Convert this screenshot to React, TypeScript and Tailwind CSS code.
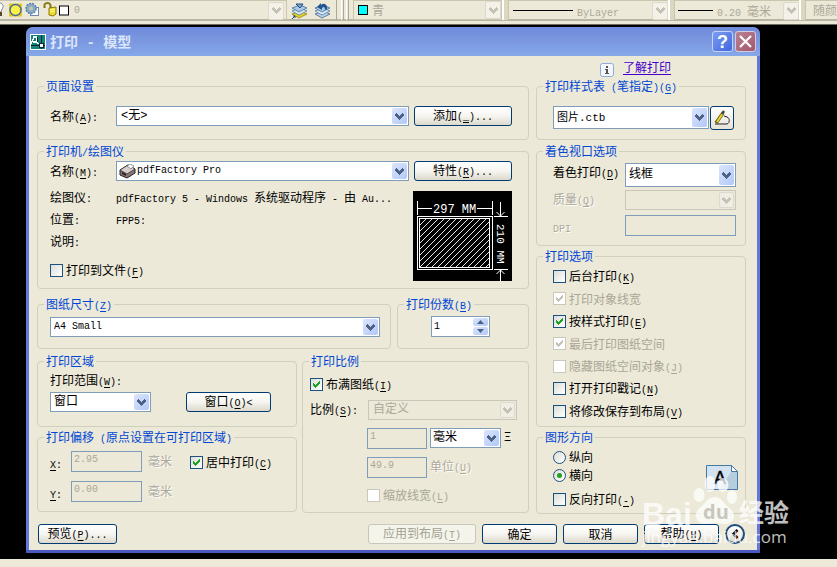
import React from "react";

const mono = "font-['Liberation_Mono','Noto_Sans_CJK_SC',monospace]";

/* Label text: ASCII runs are set in the half-width face, "&" marks the access key. */
function T({ s }: { s: string }) {
  const runs = s.match(/[\x20-\x7e]+|[^\x20-\x7e]+/g) ?? [];
  return (
    <span className="whitespace-pre">
      {runs.map((run, i) => {
        if (run.charCodeAt(0) > 126) return <span key={i}>{run}</span>;
        const at = run.indexOf("&");
        return (
          <span key={i} className={`text-[10px] leading-none ${mono}`}>
            {at < 0 ? run : (
              <>
                {run.slice(0, at)}
                <u className="underline-offset-2">{run[at + 1]}</u>
                {run.slice(at + 2)}
              </>
            )}
          </span>
        );
      })}
    </span>
  );
}

function Chevron() {
  return (
    <svg viewBox="0 0 9 7" className="w-[9px] h-[7px]" shapeRendering="crispEdges">
      <path d="M0 1h1V0h1v1h1v1h1v1h1V2h1V1h1V0h1v1h1v2H8v1H7v1H6v1H5v1H4V6H3V5H2V4H1V3H0z" fill="currentColor" />
    </svg>
  );
}

function Combo({ id, value, label, className = "", disabled = false, size = "text-[12px]", pad = "pl-1", children }: {
  id: string; value: string; label?: string; className?: string; disabled?: boolean; size?: string; pad?: string; children?: React.ReactNode;
}) {
  return (
    <span className={`relative block ${className}`}>
      <select
        id={id}
        aria-label={label}
        disabled={disabled}
        defaultValue={value}
        className={`block appearance-none w-full h-full border ${pad} pr-5 ${size} ${mono} opacity-100 ${disabled ? "border-[#c9c7ba] bg-[#ece9d8] text-[#aca899]" : "border-[#7f9db9] bg-white text-black"}`}
      >
        <option value={value}>{value}</option>
      </select>
      {children}
      <span className={`absolute right-0.5 top-0.5 bottom-0.5 w-[15px] rounded-xs pointer-events-none flex items-center justify-center ${disabled ? "bg-[#f0eee4] border border-[#dddacb] text-[#c4c2b5]" : "bg-linear-to-br from-[#dbe5fd] to-[#b2c8f8] text-[#4d6185]"}`}>
        <Chevron />
      </span>
    </span>
  );
}

function Btn({ s, className = "", disabled = false }: { s: string; className?: string; disabled?: boolean }) {
  return (
    <button
      type="button"
      disabled={disabled}
      className={`h-5 flex items-center justify-center rounded-[3px] border leading-none ${disabled ? "border-[#c9c7ba] bg-[#f5f4ea] text-[#a1a192]" : "border-[#003c74] bg-linear-to-b from-white via-[#f6f5f0] to-[#dcd8cb]"} ${className}`}
    >
      <T s={s} />
    </button>
  );
}

function Check({ s, checked = false, disabled = false, className = "" }: { s: string; checked?: boolean; disabled?: boolean; className?: string }) {
  return (
    <label className={`flex items-center gap-[3px] h-3.5 leading-[14px] ${disabled ? "text-[#a9a796]" : ""} ${className}`}>
      <span className="grid">
        <input
          type="checkbox"
          defaultChecked={checked}
          disabled={disabled}
          className={`col-start-1 row-start-1 appearance-none size-[13px] border ${disabled ? "border-[#cac8bb] bg-white" : "border-[#1c5180] bg-linear-to-br from-[#dcdcd7] to-white"}`}
        />
        {checked && (
          <svg viewBox="0 0 13 13" className={`col-start-1 row-start-1 size-[13px] pointer-events-none ${disabled ? "text-[#c4c2b5]" : "text-[#21a121]"}`} shapeRendering="crispEdges">
            <path d="M3 5h1v1h1v1h1V6h1V5h1V4h1V3h1v3H9v1H8v1H7v1H6v1H5V9H4V8H3z" fill="currentColor" />
          </svg>
        )}
      </span>
      <T s={s} />
    </label>
  );
}

function Radio({ s, checked = false }: { s: string; checked?: boolean }) {
  return (
    <label className="flex items-center gap-[3px] h-3.5 leading-[14px]">
      <span className="grid place-items-center">
        <input type="radio" name="orientation" defaultChecked={checked} className="col-start-1 row-start-1 appearance-none size-[13px] rounded-full border border-[#1c5180] bg-linear-to-br from-[#dcdcd7] to-white" />
        {checked && <span className="col-start-1 row-start-1 size-[5px] rounded-full bg-[#21a121] pointer-events-none" />}
      </span>
      <T s={s} />
    </label>
  );
}

function Group({ title, className = "", children }: { title: string; className?: string; children: React.ReactNode }) {
  return (
    <fieldset className={`border border-[#d0d0bf] rounded-[4px] min-w-0 ${className}`}>
      <legend className="ml-1.5 px-0.5 h-4 leading-4 text-[#0046d5]"><T s={title} /></legend>
      {children}
    </fieldset>
  );
}

function Num({ id, label, value, className = "" }: { id: string; label?: string; value: string; className?: string }) {
  return (
    <input id={id} aria-label={label} disabled defaultValue={value} className={`block h-[21px] min-w-0 border border-[#7f9db9] bg-[#ece9d8] pl-0.5 pb-1 text-[10px] text-[#aca899] ${mono} ${className}`} />
  );
}

const etched = "text-[#aca899] [text-shadow:1px_1px_0_white]";

function BarArrow() {
  return (
    <button type="button" aria-label="展开" className="w-4 h-[18px] shrink-0 border border-[#dddacb] bg-[#f3f1e8] rounded-xs flex items-center justify-center text-[#c4c2b5]">
      <Chevron />
    </button>
  );
}

function Sep() {
  return <span className="w-[7px] shrink-0 h-5 border-l-2 border-l-white border-r border-r-[#c9c5ae] bg-[#dcd8c0]" />;
}

function Layers({ back = false }: { back?: boolean }) {
  return (
    <svg viewBox="0 0 17 17" className="w-[17px] h-[17px]">
      <path d="M1 12l8-3 7 3-8 4z" fill={back ? "#b9d0e6" : "#e3d12c"} stroke={back ? "#48678b" : "#8f8112"} strokeWidth=".8" />
      <path d="M1 9l8-3 7 3-8 4z" fill="#dcebf5" stroke="#517da5" strokeWidth=".8" />
      <path d="M1 6l8-3 7 3-8 4z" fill="#a9c9e5" stroke="#426f9e" strokeWidth=".8" />
      {back ? <path d="M13 7c1-4-3-7-6-4V1L3 5l5 3V6c2-2 3-1 3 2z" fill="#21558d" /> : <path d="M1 17l3-3m0 0H2m2 0v2M5 2h7l-3 4z" stroke="#173d73" fill="#7fa9d3" strokeWidth=".9" />}
    </svg>
  );
}

function Toolbar() {
  return (
    <header className="h-[25px] bg-[#ece9d8] border-b border-[#6e6b5c] overflow-hidden">
      <div className="h-[21px] flex items-start border-b-2 border-[#b8b5a2] text-[#aca899]">
        <div className="w-[287px] h-5 shrink-0 flex items-center border-t border-r border-[#c9c5ae] pr-0.5">
          <svg viewBox="0 0 72 19" className="w-[72px] h-[19px] shrink-0">
            <path d="M0 2c3 0 4 4 2 6l-1 3H0" fill="#fff" stroke="#888" />
            <path d="M1 11v4" stroke="#55492a" strokeWidth="2" />
            <rect x="9" y="2.500" width="13" height="13" fill="#e6c922" />
            <circle cx="15.500" cy="9" r="5.500" fill="#fbf04a" stroke="#456a9b" strokeWidth="1.400" />
            <rect x="30.500" y="6.500" width="8" height="8" fill="#fff" stroke="#6b8cae" />
            <circle cx="31" cy="7.500" r="5" fill="#89a9c8" stroke="#5d82a8" strokeDasharray="2 1" strokeWidth="1.500" />
            <circle cx="31" cy="7.500" r="2" fill="#c3c9ad" />
            <path d="M44.500 7V4c0-2 5-3 6 0v5" fill="none" stroke="#85780d" strokeWidth="2" />
            <path d="M49 7l7-1v7l-3 2-4-1z" fill="#f0dc26" stroke="#85780d" />
            <path d="M50 9l5-1M50 11l5-1" stroke="#fff799" />
            <rect x="59.500" y="5" width="9" height="9" fill="#fff" stroke="#000" />
          </svg>
          <span className={`ml-0.5 text-[10px] flex-1 ${mono}`}>0</span>
          <BarArrow />
        </div>
        <div className="w-[50px] h-5 shrink-0 flex items-center gap-1.5 pl-1 border-r border-[#aca899]">
          <button type="button" aria-label="图层"><Layers /></button>
          <button type="button" aria-label="上一个图层"><Layers back /></button>
        </div>
        <div className="w-4 h-5 shrink-0 flex gap-0.5 pl-1">
          <span className="w-[3px] border-l border-white border-r border-r-[#aca899]" />
          <span className="w-[3px] border-l border-white border-r border-r-[#aca899]" />
        </div>
        <div className="w-[149px] h-5 shrink-0 flex items-center gap-1 border border-[#c9c5ae] pl-1">
          <span className="size-2.5 bg-[#00ffff] border border-black" />
          <span className="flex-1">青</span>
          <BarArrow />
        </div>
        <Sep />
        <div className="w-[159px] h-5 shrink-0 flex items-center gap-1 border-t border-[#c9c5ae] pl-1">
          <span className="w-[60px] h-px bg-black" />
          <span className="flex-1"><T s="ByLayer" /></span>
          <BarArrow />
        </div>
        <Sep />
        <div className="w-[124px] h-5 shrink-0 flex items-center gap-1 border-t border-[#c9c5ae] pl-[3px]">
          <span className="w-[35px] h-px bg-black" />
          <span className="flex-1"><T s="0.20 毫米" /></span>
          <BarArrow />
        </div>
        <Sep />
        <div className="h-5 flex-1 leading-[18px] pl-[7px] whitespace-nowrap overflow-hidden border-t border-[#c9c5ae]">随颜</div>
      </div>
    </header>
  );
}

function PaperPreview() {
  return (
    <svg viewBox="0 0 99 90" className="w-[99px] h-[90px] bg-black shrink-0" fill="none" stroke="#fff">
      <g shapeRendering="crispEdges">
        <rect x="4.500" y="25.500" width="75" height="53" />
        <rect x="6.500" y="27.500" width="70" height="49" />
        <path d="M4.500 10v14M79.500 10v14M5 17.500h14M64 17.500h15M81 25.500h14M81 78.500h14M87.500 11v14M87.500 79v11" />
      </g>
      <path
        strokeWidth=".9"
        d="M7 34l6-6M7 40l12-12M7 46l18-18M7 52l24-24M7 58l30-30M7 64l36-36M7 70l42-42M7 76l48-48M13 76l48-48M19 76l48-48M25 76l48-48M31 76l45-45M37 76l39-39M43 76l33-33M49 76l27-27M55 76l21-21M61 76l15-15M67 76l9-9M73 76l3-3"
      />
      <path d="M83.500 21l4 4 4-4M83.500 83l4-4 4 4" />
      <text x="20" y="22" fontSize="12" fill="#fff" stroke="none" fontFamily="Liberation Mono, monospace">297 MM</text>
      <text transform="translate(84 33) rotate(90)" fontSize="11" fill="#fff" stroke="none" fontFamily="Liberation Mono, monospace">210 MM</text>
    </svg>
  );
}

function Watermark() {
  return (
    <div className="absolute right-[46px] bottom-[18px] w-[149px] h-[74px] pointer-events-none text-white/75 font-['Open_Sans','Noto_Sans_CJK_SC',sans-serif]">
      <span className="absolute left-0 top-[21px] text-[32px] leading-9 font-bold font-['Liberation_Sans',sans-serif]">Bai</span>
      <svg viewBox="0 0 46 52" className="absolute left-[51px] top-0 w-[46px] h-[52px]" fill="currentColor">
        <ellipse cx="6" cy="20" rx="5.500" ry="7" />
        <ellipse cx="17" cy="9" rx="5.500" ry="8" />
        <ellipse cx="30" cy="10" rx="5.500" ry="7" />
        <ellipse cx="39" cy="22" rx="5" ry="7" />
        <path d="M22 22c5 0 8 4 10 7 4 4 9 7 9 12 0 7-6 8-10 8-4 0-6-1-9-1s-6 1-10 1c-5 0-9-3-9-9 0-5 5-8 9-12 2-3 5-6 10-6z" />
      </svg>
      <span className="absolute left-[61px] top-[25px] text-[20px] leading-6 font-bold text-[#c9c7bd]">du</span>
      <span className="absolute left-[97px] top-[19px] text-[25px] leading-9 font-bold whitespace-nowrap">经验</span>
      <span className="absolute left-0 top-[50px] text-[17px] leading-6 whitespace-nowrap">jingyan.baidu.com</span>
    </div>
  );
}

export default function App() {
  return (
    <div className="relative min-h-screen flex flex-col bg-black text-[12px] leading-4 text-black overflow-hidden font-['Noto_Sans_CJK_SC',sans-serif]">
      <Toolbar />
      <main className="flex-1 pt-0.5 pb-1.5 pl-[26px] pr-[77px]">
        <section role="dialog" aria-labelledby="dialog-title" className="min-w-[734px] rounded-t-[7px] bg-[#6478dc] border-b-[3px] border-[#4a58c0] overflow-hidden">
          <div className="h-[29px] flex items-center pl-1 pr-1 bg-linear-to-b from-[#6f8bdc] via-[#7b98e0] to-[#85a9e9]">
            <svg viewBox="0 0 16 16" className="size-4 mr-1" shapeRendering="crispEdges">
              <rect width="16" height="16" fill="#fff" />
              <rect x="1" y="1" width="14" height="14" fill="#128577" />
              <path d="M1 10l3-7h2l2 7M3 8h4" stroke="#fff" strokeWidth="1.500" fill="none" />
              <path d="M11 1v14M1 11h14M7 3v5" stroke="#10263a" />
              <rect x="9" y="9" width="4" height="4" fill="#fff" stroke="#10263a" />
            </svg>
            <h1 id="dialog-title" className="flex-1 text-[14px] font-bold text-[#dbe6fb] whitespace-pre">
              打印<span className={`leading-none ${mono}`}> - </span>模型
            </h1>
            <button type="button" aria-label="帮助" className="size-[21px] rounded-[3px] border border-[#c5d3f6] bg-linear-to-br from-[#7d9cf0] to-[#3f66de] text-white flex items-center justify-center text-[18px] font-bold leading-none font-['Liberation_Sans',sans-serif]">?</button>
            <button type="button" aria-label="关闭" className="ml-0.5 size-[21px] rounded-[3px] border border-[#d5cbe0] bg-linear-to-br from-[#b68395] to-[#a5566b] flex items-center justify-center">
              <svg viewBox="0 0 13 13" className="size-[13px]" stroke="#fff" strokeWidth="2.200"><path d="M1 1l11 11M12 1L1 12" /></svg>
            </button>
          </div>

          <form className="mx-[3px] bg-[#ece9d8] pl-2 pr-[11px] pb-1.5" onSubmit={(e) => e.preventDefault()}>
            <div className="flex justify-end items-start gap-[9px] h-[22px] pt-[3px] pr-[75px]">
              <svg viewBox="0 0 14 14" className="size-3.5 mt-1">
                <rect x=".5" y=".5" width="13" height="13" rx="2" fill="#f4f6fb" stroke="#8eabdc" />
                <path d="M6 3h2v2H6zM5 6h3v4h1v1H5v-1h1V7H5z" fill="#555" />
              </svg>
              <a href="#learn" className="text-[#4400cc] underline underline-offset-2">了解打印</a>
            </div>

            <div className="flex gap-[7px]">
              <div className="flex-1 min-w-0">
                <Group title="页面设置">
                  <div className="flex pl-3 pr-4 pt-3 pb-[13px]">
                    <label htmlFor="setup" className="w-[66px] leading-5"><T s="名称(&A):" /></label>
                    <Combo id="setup" value="<无>" className="flex-1 h-5" />
                    <Btn s="添加(&_)..." className="ml-[5px] w-[98px]" />
                  </div>
                </Group>

                <Group title="打印机/绘图仪" className="mt-[3px]">
                  <div className="pl-3 pr-4 pt-0.5 pb-[7px]">
                    <div className="flex">
                      <label htmlFor="printer" className="w-[66px] leading-5"><T s="名称(&M):" /></label>
                      <Combo id="printer" value="pdfFactory Pro" className="flex-1 h-5" size="text-[10px]" pad="pl-5">
                        <svg viewBox="0 0 17 15" className="absolute left-[3px] top-[3px] w-[17px] h-[15px] pointer-events-none">
                          <path d="M1 6l8-5 7 4v4l-8 5-7-3z" fill="#8a7478" stroke="#222" />
                          <path d="M1 6l8-5 7 4-8 5z" fill="#d8cdcf" stroke="#333" strokeWidth=".8" />
                          <path d="M8 2l3-2 4 2-3 3z" fill="#fff" stroke="#555" strokeWidth=".6" />
                          <path d="M3 8l4 2v2l-4-2z" fill="#2b2022" />
                        </svg>
                      </Combo>
                      <Btn s="特性(&R)..." className="ml-[5px] w-[98px]" />
                    </div>
                    <div className="flex">
                      <div className="flex-1 min-w-0 pt-[5px]">
                        <dl className="grid grid-cols-[66px_1fr] leading-[22px]">
                          <dt><T s="绘图仪:" /></dt>
                          <dd className="truncate"><T s="pdfFactory 5 - Windows 系统驱动程序 - 由 Au..." /></dd>
                          <dt><T s="位置:" /></dt>
                          <dd><T s="FPP5:" /></dd>
                          <dt><T s="说明:" /></dt>
                          <dd />
                        </dl>
                        <Check s="打印到文件(&F)" className="mt-[11px]" />
                      </div>
                      <div className="pt-2.5"><PaperPreview /></div>
                    </div>
                  </div>
                </Group>

                <div className="flex gap-1.5 mt-[7px]">
                  <Group title="图纸尺寸(&Z)" className="flex-1">
                    <div className="pl-3 pr-2.5 pt-[5px] pb-[11px]">
                      <Combo id="paper" label="图纸尺寸" value="A4 Small" className="h-5" size="text-[10px]" pad="pl-[3px]" />
                    </div>
                  </Group>
                  <Group title="打印份数(&B)" className="w-[132px]">
                    <div className="pl-[33px] pt-1 pb-[11px]">
                      <div className="w-[59px] h-[21px] flex border border-[#7f9db9] bg-white p-px">
                        <input aria-label="打印份数" defaultValue="1" className={`min-w-0 flex-1 pl-px text-[10px] outline-none ${mono}`} />
                        <span className="w-[15px] flex flex-col gap-px">
                          <button type="button" aria-label="增加" className="flex-1 bg-linear-to-br from-[#dbe5fd] to-[#b2c8f8] rounded-xs flex items-center justify-center">
                            <svg viewBox="0 0 7 4" className="w-[7px] h-1"><path d="M0 4l3.500-4L7 4z" fill="#4d6185" /></svg>
                          </button>
                          <button type="button" aria-label="减少" className="flex-1 bg-linear-to-br from-[#dbe5fd] to-[#b2c8f8] rounded-xs flex items-center justify-center">
                            <svg viewBox="0 0 7 4" className="w-[7px] h-1"><path d="M0 0l3.500 4L7 0z" fill="#4d6185" /></svg>
                          </button>
                        </span>
                      </div>
                    </div>
                  </Group>
                </div>

                <div className="flex items-start gap-[5px] mt-1">
                  <div className="flex-1 min-w-0">
                    <Group title="打印区域">
                      <div className="pl-3 pt-[3px] pb-3.5">
                        <label htmlFor="range" className="block"><T s="打印范围(&W):" /></label>
                        <div className="flex gap-[35px] mt-1">
                          <Combo id="range" value="窗口" className="w-[101px] h-5" pad="pl-[3px]" />
                          <Btn s="窗口(&O)<" className="w-[85px]" />
                        </div>
                      </div>
                    </Group>
                    <Group title="打印偏移 (原点设置在可打印区域)" className="mt-0.5">
                      <div className="pl-3 pt-1.5 pb-[9px] flex">
                        <div className="grid grid-cols-[21px_71px_auto] gap-y-[9px] leading-5">
                          <label htmlFor="offset-x" className="h-[21px] leading-6"><T s="&X:" /></label>
                          <Num id="offset-x" value="2.95" />
                          <span className={`pl-1.5 ${etched}`}>毫米</span>
                          <label htmlFor="offset-y" className="h-[21px] leading-6"><T s="&Y:" /></label>
                          <Num id="offset-y" value="0.00" />
                          <span className={`pl-1.5 ${etched}`}>毫米</span>
                        </div>
                        <Check s="居中打印(&C)" checked className="ml-[18px] mt-1" />
                      </div>
                    </Group>
                  </div>

                  <Group title="打印比例" className="w-[227px]">
                    <div className="pl-[7px] pr-[11px] pt-2 pb-2.5">
                      <Check s="布满图纸(&I)" checked />
                      <div className="flex mt-[9px]">
                        <label htmlFor="scale" className="w-[58px] leading-[18px]"><T s="比例(&S):" /></label>
                        <Combo id="scale" value="自定义" disabled className="flex-1 h-5" />
                      </div>
                      <div className="flex flex-col gap-2 mt-2 pl-[57px]">
                        <div className="flex gap-[3px]">
                          <Num id="scale-paper" label="图纸单位" value="1" className="w-[60px]" />
                          <Combo id="scale-unit" label="单位" value="毫米" className="w-[71px] h-5" pad="pl-0.5" />
                          <span>Ξ</span>
                        </div>
                        <div className="flex gap-[3px]">
                          <Num id="scale-drawing" value="49.9" className="w-[60px]" />
                          <label htmlFor="scale-drawing" className={`leading-[18px] ${etched}`}><T s="单位(&U)" /></label>
                        </div>
                      </div>
                      <Check s="缩放线宽(&L)" disabled className="ml-[57px] mt-2.5" />
                    </div>
                  </Group>
                </div>
              </div>

              <div className="w-[210px]">
                <Group title="打印样式表 (笔指定)(&G)">
                  <div className="flex gap-px pl-4 pr-[11px] pt-3 pb-[9px]">
                    <Combo id="style" label="打印样式表" value="图片.ctb" className="flex-1 h-[23px]" size="text-[11px]" pad="pl-[3px]" />
                    <button type="button" aria-label="编辑" className="size-6 rounded-[3px] border border-[#003c74] bg-linear-to-b from-white to-[#e6e3d8] flex items-center justify-center">
                      <svg viewBox="0 0 17 16" className="w-[17px] h-4" fill="none">
                        <path d="M1 14h12c3-1 3-6 0-7l-3-1" stroke="#222" />
                        <path d="M2 13L9 3" stroke="#665c12" strokeWidth="3.500" />
                        <path d="M3 12l6-9" stroke="#e6d62f" strokeWidth="2" />
                        <path d="M8 4l2-3" stroke="#444" strokeWidth="2.500" />
                      </svg>
                    </button>
                  </div>
                </Group>

                <Group title="着色视口选项" className="mt-[3px]">
                  <div className="grid grid-cols-[72px_1fr] pl-4 pr-[9px] pt-1 pb-[9px]">
                    <label htmlFor="shade" className="leading-[18px]"><T s="着色打印(&D)" /></label>
                    <Combo id="shade" value="线框" className="h-6" pad="pl-[3px]" />
                    <label htmlFor="quality" className={`mt-[3px] h-5 leading-[18px] ${etched}`}><T s="质量(&Q)" /></label>
                    <Combo id="quality" value="" disabled className="mt-[3px] h-5" />
                    <label htmlFor="dpi" className={`mt-[5px] h-[21px] leading-6 ${etched}`}><T s="DPI" /></label>
                    <Num id="dpi" value="" className="mt-[5px]" />
                  </div>
                </Group>

                <Group title="打印选项" className="mt-0.5">
                  <div className="pl-4 pt-[5px] pb-2">
                    <div className="h-[149px] flex flex-col justify-between">
                      <Check s="后台打印(&K)" />
                      <Check s="打印对象线宽" checked disabled />
                      <Check s="按样式打印(&E)" checked />
                      <Check s="最后打印图纸空间" checked disabled />
                      <Check s="隐藏图纸空间对象(&J)" disabled />
                      <Check s="打开打印戳记(&N)" />
                      <Check s="将修改保存到布局(&V)" />
                    </div>
                  </div>
                </Group>

                <Group title="图形方向" className="mt-0.5">
                  <div className="flex justify-between pl-4 pr-[7px] pt-[5px] pb-[7px]">
                    <div className="flex flex-col gap-1">
                      <Radio s="纵向" />
                      <Radio s="横向" checked />
                      <Check s="反向打印(&-)" className="mt-1.5" />
                    </div>
                    <svg viewBox="0 0 32 25" className="w-8 h-[25px] mt-[15px]">
                      <path d="M.5.500h25l6 6v18H.5z" fill="#d3e3ef" stroke="#4679a5" />
                      <path d="M31 7v17H14L25 7z" fill="#b5cede" />
                      <path d="M25.500.500v6h6z" fill="#fff" stroke="#4679a5" />
                      <text x="8" y="19" fontSize="18" fontFamily="Liberation Sans, sans-serif" fill="#000" stroke="#000" strokeWidth=".4">A</text>
                    </svg>
                  </div>
                </Group>
              </div>
            </div>

            <div className="flex gap-1.5 mt-2.5 px-px">
              <Btn s="预览(&P)..." className="w-[79px]" />
              <Btn s="应用到布局(&T)" disabled className="w-[108px] ml-auto" />
              <Btn s="确定" className="w-[75px]" />
              <Btn s="取消" className="w-[75px]" />
              <Btn s="帮助(&H)" className="w-[75px]" />
              <button type="button" aria-label="收起" className="size-5 rounded-full border-2 border-[#1c4a7c] bg-linear-to-b from-white to-[#dcd8cb] flex items-center justify-center">
                <svg viewBox="0 0 8 10" className="w-2 h-2.5" fill="none" stroke="#000" strokeWidth="2.500"><path d="M6.500 1l-4 4 4 4" /></svg>
              </button>
            </div>
          </form>
        </section>
      </main>
      <footer className="h-2 bg-[#ece9d8]" />
      <Watermark />
    </div>
  );
}
